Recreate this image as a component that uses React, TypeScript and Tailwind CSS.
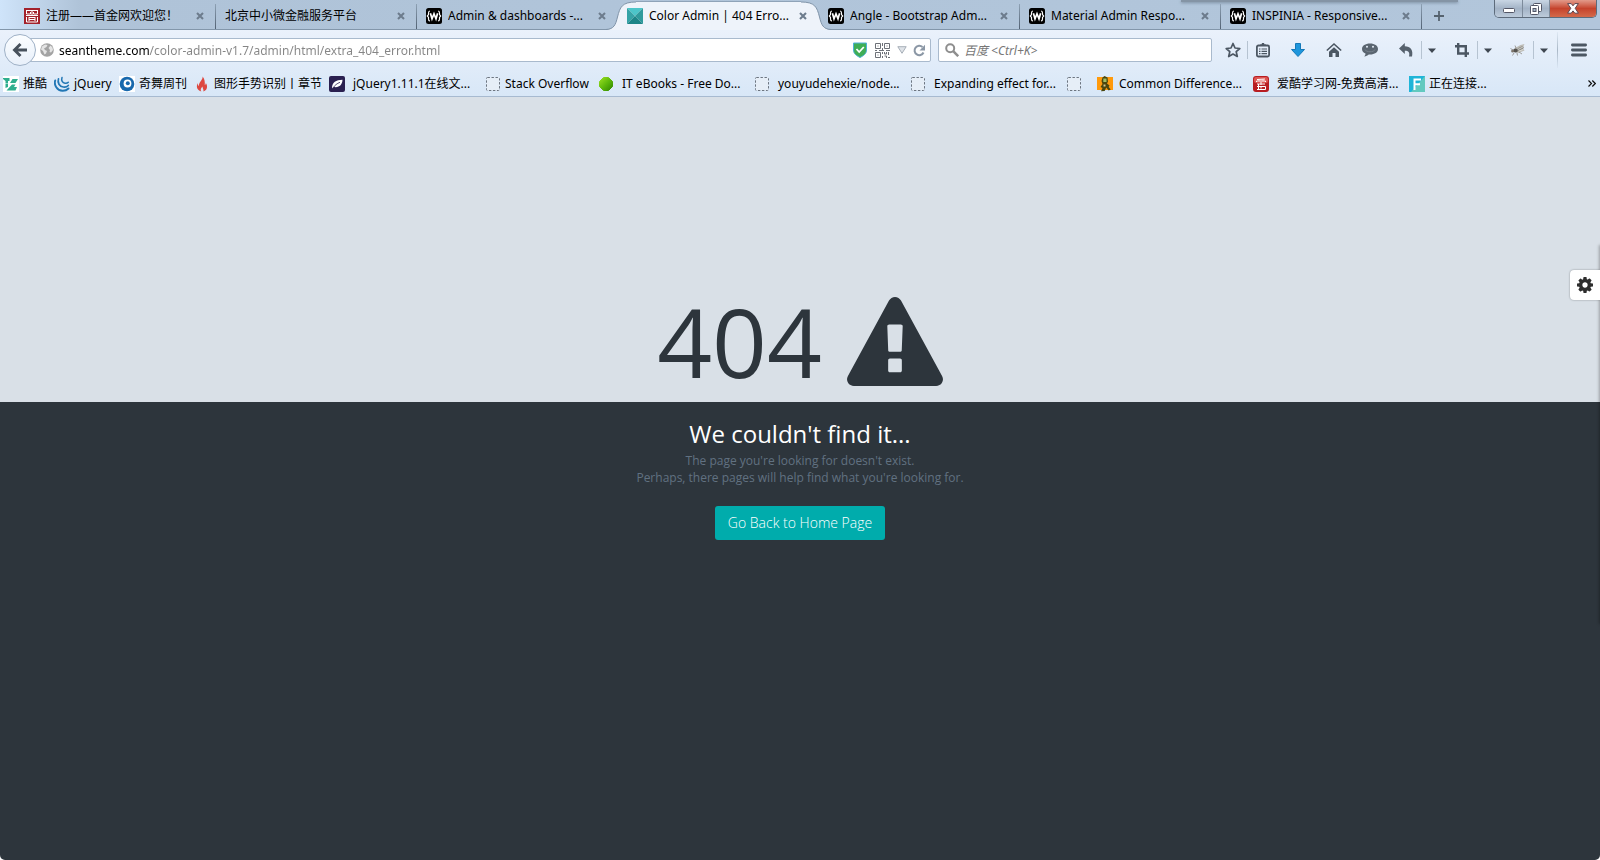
import type { ReactNode } from "react";

const WIcon = () => (
  <svg width="16" height="16" viewBox="0 0 16 16" aria-hidden="true">
    <rect width="16" height="16" rx="2.5" fill="#000" />
    <path d="M4 3C2.700 3 2.500 3.800 2.500 5v1.600L1.300 8l1.200 1.400V11c0 1.200.2 2 1.500 2M12 3c1.300 0 1.500.8 1.500 2v1.600L14.700 8l-1.200 1.400V11c0 1.200-.2 2-1.500 2" fill="none" stroke="#fff" strokeWidth="1.200" />
    <path d="M4.400 5.300l1.600 5.500L8 5.800l2 5 1.600-5.500" fill="none" stroke="#fff" strokeWidth="1.700" />
  </svg>
);

const SealIcon = () => (
  <svg width="16" height="16" viewBox="0 0 16 16" aria-hidden="true">
    <rect width="16" height="16" fill="#a3222b" />
    <path d="M2 2.5h12M2.5 2v4h4V4M13.5 2v4h-4V4M8 2v5M2 7.5h12M2.5 9v5h11V9M5 9.5h6M5 11.5h6M5 9v4M11 9v4" fill="none" stroke="#fff" />
  </svg>
);

const PyramidIcon = () => (
  <svg width="16" height="16" viewBox="0 0 16 16" aria-hidden="true">
    <path d="M0 0h16L8 8z" fill="#4cc5c9" />
    <path d="M0 0l8 8-8 8z" fill="#35a3a6" />
    <path d="M16 0v16L8 8z" fill="#2f9a9c" />
    <path d="M0 16l8-8 8 8z" fill="#1d8587" />
  </svg>
);

const DashedIcon = () => (
  <svg width="16" height="16" viewBox="0 0 16 16" aria-hidden="true">
    <rect x="1.5" y="1.5" width="13" height="13" rx="1" fill="#e6eef7" stroke="#6c7580" strokeDasharray="2.4 1.6" />
  </svg>
);

const TuikuIcon = () => (
  <svg width="16" height="16" viewBox="0 0 16 16" aria-hidden="true">
    <rect width="16" height="16" fill="#fff" />
    <path d="M0 2h6.500v3H5v2H2.500V5L0 3zM7 7l2.500-4H15l-2.500 4zM2.500 7.500H5V11l-2.500 1zM3.500 14.500L9 8.500h3.500l-1.500 2.500h3l-1.500 3.500z" fill="#2fae8e" />
  </svg>
);

const JqueryIcon = () => (
  <svg width="16" height="16" viewBox="0 0 16 16" aria-hidden="true" fill="none" stroke="#2277b5" strokeLinecap="round">
    <path d="M1.2 4.5C-.2 9 3 14.6 8.500 14.800c2.500.1 4.500-.8 6-2.300" strokeWidth="1.900" />
    <path d="M4.500 2.800c-1.300 4 1 7.700 4.800 8.200 2.300.3 4-.4 5-1.500" strokeWidth="1.700" />
    <path d="M8 1.500c-1 3 .5 5.300 3 5.700 1.500.2 2.600-.2 3.300-.9" strokeWidth="1.500" />
  </svg>
);

const QiwuIcon = () => (
  <svg width="16" height="16" viewBox="0 0 16 16" aria-hidden="true">
    <rect width="16" height="16" fill="#fff" />
    <circle cx="8" cy="8" r="7.300" fill="#1768ad" />
    <circle cx="8.500" cy="7.500" r="3.900" fill="#fff" />
    <circle cx="8.800" cy="7.200" r="2" fill="#1768ad" />
  </svg>
);

const FlameIcon = () => (
  <svg width="16" height="16" viewBox="0 0 16 16" aria-hidden="true">
    <path d="M8.600.5c.6 3-3.800 5.500-3.800 9.500C3.900 9.500 3.700 8 3.900 7 2.300 9 2 14 7.300 15.500c-1.200-1.600-.4-3.600 1.200-5 0 1.900 1.400 2.800.9 5 4.300-1.300 4.400-6 2.400-8.500 0 1-.4 1.700-1 2C11 5.500 10.500 2.500 8.600.5z" fill="#dd4840" />
  </svg>
);

const LeafIcon = () => (
  <svg width="16" height="16" viewBox="0 0 16 16" aria-hidden="true">
    <rect width="16" height="16" rx="2" fill="#2a2050" />
    <path d="M3 12.500C3 6 7 4 13.500 3.800c-.2 5.200-3.300 8-8.600 7.200z" fill="#fff" />
    <path d="M3.500 12.500C6 9 8 7.500 11 6.300" fill="none" stroke="#2a2050" strokeWidth=".8" />
  </svg>
);

const GreenIcon = () => (
  <svg width="16" height="16" viewBox="0 0 16 16" aria-hidden="true">
    <defs>
      <linearGradient id="lime" x1="0" y1="0" x2="1" y2="1">
        <stop offset="0" stopColor="#9be022" />
        <stop offset=".5" stopColor="#5fb90c" />
        <stop offset="1" stopColor="#2f8700" />
      </linearGradient>
    </defs>
    <path d="M5.500 1.500h5l4 4v5l-4 4h-5l-4-4v-5z" fill="url(#lime)" stroke="url(#lime)" strokeLinejoin="round" />
  </svg>
);

const HikerIcon = () => (
  <svg width="16" height="16" viewBox="0 0 16 16" aria-hidden="true">
    <rect y="1" width="16" height="13" fill="#ff9a0c" />
    <path d="M7.500 0l3 1.500.5 4-1 2 2.500 2-.8 1.500 2 2.500-2 1-2.500-3-1.500 3.500-3.700.3 1.500-3.300L3.500 11l2-3-1-3 1-3.500z" fill="#49460f" />
    <path d="M6.300 2.500h3.200v3.500H6.300z" fill="#9fbd64" />
    <path d="M6.500 8.500h2v2h-2z" fill="#d5c68d" />
  </svg>
);

const AikuIcon = () => (
  <svg width="16" height="16" viewBox="0 0 16 16" aria-hidden="true">
    <rect width="16" height="16" rx="3" fill="#b81d22" />
    <rect x="1" y="1" width="14" height="6" rx="2" fill="#dc5552" />
    <path d="M4 3.500l8-.5M3.500 6V5h9v1M5.500 3.500l.5 1M10 3.500v1M4 8h8M5.500 8v5M8 6v3M4 10.500h8.500v3H4M8 10.500v2" fill="none" stroke="#fff" />
  </svg>
);

const FIcon = () => (
  <svg width="16" height="16" viewBox="0 0 16 16" aria-hidden="true">
    <rect width="16" height="16" fill="#1fb5d8" />
    <path d="M16 0v16H2z" fill="#62c9bf" />
    <path d="M5.500 14V3.500H12M5.500 8.300H11" fill="none" stroke="#fff" strokeWidth="2" />
  </svg>
);

const CloseGlyph = () => (
  <svg width="8" height="8" viewBox="0 0 8 8" aria-hidden="true">
    <path d="M1 1l6 6M7 1L1 7" stroke="#6d7c8d" strokeWidth="2.100" />
  </svg>
);

type TabData = { title: string; icon?: ReactNode; active?: boolean; divider?: boolean };

const tabs: TabData[] = [
  { title: "注册——首金网欢迎您！", icon: <SealIcon />, divider: true },
  { title: "北京中小微金融服务平台", divider: true },
  { title: "Admin & dashboards -...", icon: <WIcon /> },
  { title: "Color Admin | 404 Erro...", icon: <PyramidIcon />, active: true },
  { title: "Angle - Bootstrap Adm...", icon: <WIcon />, divider: true },
  { title: "Material Admin Respo...", icon: <WIcon />, divider: true },
  { title: "INSPINIA - Responsive...", icon: <WIcon />, divider: true },
];

const bookmarks: { title: string; icon: ReactNode; width: string }[] = [
  { title: "推酷", icon: <TuikuIcon />, width: "w-[51px] gap-1" },
  { title: "jQuery", icon: <JqueryIcon />, width: "w-[65px] gap-1" },
  { title: "奇舞周刊", icon: <QiwuIcon />, width: "w-[75px] gap-1" },
  { title: "图形手势识别丨章节", icon: <FlameIcon />, width: "w-[135px] gap-1" },
  { title: "jQuery1.11.1在线文...", icon: <LeafIcon />, width: "w-[156px] gap-2" },
  { title: "Stack Overflow", icon: <DashedIcon />, width: "w-[113px] gap-1" },
  { title: "IT eBooks - Free Do...", icon: <GreenIcon />, width: "w-[156px] gap-2" },
  { title: "youyudehexie/node...", icon: <DashedIcon />, width: "w-[156px] gap-2" },
  { title: "Expanding effect for...", icon: <DashedIcon />, width: "w-[156px] gap-2" },
  { title: "", icon: <DashedIcon />, width: "w-[31px]" },
  { title: "Common Difference...", icon: <HikerIcon />, width: "w-[156px] gap-[6px]" },
  { title: "爱酷学习网-免费高清...", icon: <AikuIcon />, width: "w-[156px] gap-2" },
  { title: "正在连接...", icon: <FIcon />, width: "w-[156px] gap-1" },
];

function Tab({ tab }: { tab: TabData }) {
  return (
    <div className="relative flex h-[30px] w-[201px] min-w-0 items-center pl-[9px] pr-3 pt-px">
      {tab.active && (
        <span className="absolute -inset-x-[12px] inset-y-0 flex">
          <svg width="30" height="30" viewBox="0 0 30 30" aria-hidden="true">
            <path d="M0 30C8 29 9.500 25 11.500 17 14 7 16 2 30 2v28z" fill="#eef3fa" />
            <path d="M0 29.500C8 29 9.500 25 11.500 17 14 7 16 2 30 2" fill="none" stroke="#7f93a8" />
          </svg>
          <span className="mt-px flex-1 border-t border-[#8fa3b8] bg-[#eef3fa]" />
          <svg width="30" height="30" viewBox="0 0 30 30" aria-hidden="true">
            <path d="M30 30c-8-1-9.500-5-11.500-13C16 7 14 2 0 2v28z" fill="#eef3fa" />
            <path d="M30 29.500c-8-.5-9.500-4.500-11.500-12.500C16 7 14 2 0 2" fill="none" stroke="#7f93a8" />
          </svg>
        </span>
      )}
      <a href="#" className="relative flex min-w-0 flex-1 items-center gap-[6px]">
        {tab.icon && <span className="shrink-0">{tab.icon}</span>}
        <span className="overflow-hidden whitespace-nowrap">{tab.title}</span>
      </a>
      <button type="button" aria-label="Close tab" className="relative shrink-0">
        <CloseGlyph />
      </button>
      {tab.divider && <span className="absolute right-0 top-1 h-[25px] w-px bg-linear-to-b from-[#8ea1b4] to-[#526273]" />}
    </div>
  );
}

function WindowButtons() {
  return (
    <div className="mr-[3px] flex h-[18px] self-start overflow-hidden rounded-b-[5px] border border-t-0 border-[#5d6b7b]">
      <button type="button" aria-label="Minimize" className="flex w-[28px] items-center justify-center border-r border-[#7d8b9b] bg-linear-to-b from-[#c9d6e4] via-[#a3b3c6] to-[#bdcbdb]">
        <svg width="12" height="5" viewBox="0 0 12 5" aria-hidden="true" className="mt-1">
          <rect x=".5" y=".5" width="11" height="4" rx="1" fill="#fff" stroke="#535666" />
        </svg>
      </button>
      <button type="button" aria-label="Restore" className="flex w-[27px] items-center justify-center border-r border-[#7d8b9b] bg-linear-to-b from-[#c9d6e4] via-[#a3b3c6] to-[#bdcbdb]">
        <svg width="12" height="12" viewBox="0 0 12 12" aria-hidden="true">
          <rect x="3.500" y=".5" width="8" height="8" rx="1" fill="#fff" stroke="#535666" />
          <rect x=".5" y="2.500" width="8" height="9" rx="1" fill="#fff" stroke="#535666" />
          <rect x="3" y="5.500" width="3" height="3" fill="#a9b8ca" stroke="#535666" />
        </svg>
      </button>
      <button type="button" aria-label="Close window" className="flex w-[46px] items-center justify-center bg-linear-to-b from-[#e29a8a] via-[#c5432c] to-[#d4694a]">
        <svg width="12" height="11" viewBox="0 0 12 11" aria-hidden="true">
          <path d="M.6.600h3.600L6 2.800 7.800.600h3.600L8.200 5.300l3.200 4.900H7.800L6 7.900l-1.800 2.300H.600l3.200-4.900z" fill="#fff" stroke="#5c4650" strokeWidth="1" />
        </svg>
      </button>
    </div>
  );
}

function Caret() {
  return (
    <svg width="8" height="5" viewBox="0 0 8 5" aria-hidden="true">
      <path d="M0 .5h8L4 5z" fill="#3f4751" />
    </svg>
  );
}

const ToolButton = ({ label, width, children }: { label: string; width: string; children: ReactNode }) => (
  <button type="button" aria-label={label} className={"flex h-6 items-center justify-center " + width}>
    {children}
  </button>
);

const Rule = () => <span className="h-[18px] w-px bg-[#b6c3d1]" />;

function Toolbar() {
  return (
    <div className="flex shrink-0 items-center">
      <ToolButton label="Bookmark this page" width="w-[29px]">
        <svg width="16" height="16" viewBox="0 0 16 16" aria-hidden="true">
          <path d="M8 1.500l2 4.500 4.800.5-3.600 3.200 1.100 4.800L8 12l-4.300 2.500 1.100-4.800L1.200 6.500 6 6z" fill="none" stroke="#4c5763" strokeWidth="1.700" strokeLinejoin="round" />
        </svg>
      </ToolButton>
      <Rule />
      <ToolButton label="Show bookmarks" width="w-[29px]">
        <svg width="16" height="16" viewBox="0 0 16 16" aria-hidden="true">
          <rect x="1.900" y="3.500" width="12.200" height="11" rx="1.500" fill="none" stroke="#4c5763" strokeWidth="1.800" />
          <path d="M5 4V2.500h1.500L7 1h2l.5 1.500H11V4z" fill="#4c5763" />
          <path d="M4 7h1.500M4 9.300h1.500M4 11.600h1.500M6.500 7H12M6.500 9.300H12M6.500 11.600H12" stroke="#4c5763" strokeWidth="1.200" />
        </svg>
      </ToolButton>
      <ToolButton label="Downloads" width="w-[41px]">
        <svg width="16" height="16" viewBox="0 0 16 16" aria-hidden="true">
          <path d="M5.500 1.500h5v6h4L8 14.500 1.500 7.500h4z" fill="#1e96dc" stroke="#1478b8" strokeLinejoin="round" />
        </svg>
      </ToolButton>
      <ToolButton label="Home" width="w-[31px]">
        <svg width="16" height="16" viewBox="0 0 16 16" aria-hidden="true">
          <path d="M.8 8.500L8 2l7.200 6.500" fill="none" stroke="#4c5763" strokeWidth="1.600" />
          <path d="M3 9.800l5-4.500 5 4.500V15H9.500v-4h-3v4H3z" fill="#4c5763" />
        </svg>
      </ToolButton>
      <ToolButton label="Chat" width="w-[41px]">
        <svg width="18" height="16" viewBox="0 0 18 16" aria-hidden="true">
          <path d="M9 1.500c4.700 0 8 2.300 8 5.500s-3.300 5.500-8 5.500l-1.300-.1c-1 1-2.700 1.800-4.500 2 .9-.8 1.300-1.900 1.300-2.800C2.300 10.600 1 9 1 7c0-3.200 3.300-5.500 8-5.500z" fill="#5a6570" />
          <circle cx="6" cy="4.700" r="1" fill="#e4edf7" />
          <circle cx="12" cy="4.700" r="1" fill="#e4edf7" />
          <path d="M4 7.500c1 3 9 3 10 0" fill="none" stroke="#77828d" />
        </svg>
      </ToolButton>
      <ToolButton label="Undo" width="w-[31px]">
        <svg width="16" height="16" viewBox="0 0 16 16" aria-hidden="true">
          <path d="M6.800 1v3.200C12.500 4.200 15.500 8 14 14.500h-3C12 10.500 10.500 8.800 6.800 8.800V12L1 6.500z" fill="#56616d" />
        </svg>
      </ToolButton>
      <Rule />
      <ToolButton label="Undo list" width="w-[20px]"><Caret /></ToolButton>
      <ToolButton label="Crop" width="w-[35px]">
        <svg width="16" height="16" viewBox="0 0 16 16" aria-hidden="true" className="ml-1">
          <path d="M4.200 1v10.500H15M1 4.200h10.800V15" fill="none" stroke="#4c5763" strokeWidth="2.400" />
        </svg>
      </ToolButton>
      <Rule />
      <ToolButton label="Crop options" width="w-[20px]"><Caret /></ToolButton>
      <ToolButton label="Firebug" width="w-[35px]">
        <svg width="18" height="16" viewBox="0 0 18 16" aria-hidden="true" className="ml-1">
          <path d="M6 6l5.500-3 4-1-2 4 2 2.500-6 2.500-5-1z" fill="#bdbcb6" />
          <ellipse cx="6.500" cy="8.500" rx="2.400" ry="2" fill="#55524e" />
          <circle cx="3.600" cy="9" r="1.500" fill="#7b736a" />
          <path d="M1.500 6.500l2.500 1.500M5 11l-1.500 2.500M8 11l.5 2.500M10 10l3 2M7 6l-1-2.500" fill="none" stroke="#8a8680" strokeWidth=".8" />
          <ellipse cx="11.500" cy="6.500" rx="3.500" ry="1.500" transform="rotate(-25 11.500 6.500)" fill="#8b8983" />
          <path d="M9 7.500l5-2.500M10 9l4-1.500" stroke="#dedfdc" strokeWidth=".8" />
        </svg>
      </ToolButton>
      <Rule />
      <ToolButton label="Firebug options" width="w-[20px]"><Caret /></ToolButton>
      <span className="ml-[3px] h-[36px] w-px bg-linear-to-b from-[#e0eaf5] via-[#a9b7c6] to-[#dbe7f5]" />
      <ToolButton label="Open menu" width="w-[42px]">
        <svg width="16" height="14" viewBox="0 0 16 14" aria-hidden="true">
          <path d="M1.400 2h13.200M1.400 7h13.200M1.400 12h13.200" stroke="#4c5763" strokeWidth="2.800" strokeLinecap="round" />
        </svg>
      </ToolButton>
    </div>
  );
}

function NavBar() {
  return (
    <div className="flex h-10 items-center pl-1">
      <button type="button" aria-label="Back" className="relative z-10 flex size-8 shrink-0 items-center justify-center rounded-full border border-[#9fb1c6] bg-linear-to-b from-[#fbfdff] to-[#e8f0fa]">
        <svg width="16" height="16" viewBox="0 0 16 16" aria-hidden="true">
          <path d="M8.500 2L2.500 8l6 6M3 8h12" fill="none" stroke="#47515c" strokeWidth="2.900" />
        </svg>
      </button>
      <div className="-ml-2 flex h-6 min-w-0 flex-1 items-center rounded-r-[2px] border border-[#a9bacd] bg-white pl-[11px] pr-1">
        <svg width="14" height="14" viewBox="0 0 14 14" aria-hidden="true" className="shrink-0">
          <circle cx="7" cy="7" r="6.800" fill="#a3a3a3" />
          <path d="M2 3.500l3-2 2.500.5L6.500 4 4 5.500 5 7l2 1-1 2.500-1.500 1L3 8 1 6.500zM8.500 5l2-2.500 2 2L13 7l-2 2.500L9.500 9 10 7z" fill="#e4e4e4" />
        </svg>
        <input
          aria-label="Address"
          defaultValue="seantheme.com/color-admin-v1.7/admin/html/extra_404_error.html"
          className="ml-[5px] h-5 min-w-0 flex-1 bg-[linear-gradient(to_right,#000_90px,#858585_90px)] bg-clip-text text-transparent caret-black outline-none"
        />
        <svg width="14" height="16" viewBox="0 0 14 16" aria-hidden="true" className="mr-2 shrink-0">
          <path d="M.5 1h13v7c0 4-3.500 6-6.500 7.500C4 14 .5 12 .5 8z" fill="#3fae56" stroke="#4fb0d8" />
          <path d="M3.500 7l2.700 3 4.600-5" fill="none" stroke="#fff" strokeWidth="1.800" />
        </svg>
        <svg width="15" height="15" viewBox="0 0 15 15" aria-hidden="true" className="shrink-0" fill="none" stroke="#6c7077">
          <path d="M.5.500h5v5h-5zM9.500.500h5v5h-5zM.5 9.500h5v5h-5z" />
          <path d="M2.500 3h1M11.500 3h1M2.500 12h1M7.500 0v3M7.500 5v2M0 7.500h2M4 7.500h5M11 7.500h4M7.500 9v2M9.500 9v2h2V9M13.500 9v3M7.500 13v2M9.500 13h2v2M13 14.500h2" />
        </svg>
        <svg width="10" height="8" viewBox="0 0 10 8" aria-hidden="true" className="ml-[7px] shrink-0">
          <path d="M.8.700h8.400L5 7.300z" fill="#dfe3e8" stroke="#a7afb8" />
        </svg>
        <button type="button" aria-label="Reload" className="ml-[6px] shrink-0">
          <svg width="13" height="13" viewBox="0 0 13 13" aria-hidden="true">
            <path d="M10.500 8.500A4.700 4.700 0 1 1 9.500 3" fill="none" stroke="#8b97a5" strokeWidth="2" />
            <path d="M12 .8v5.700H6.500z" fill="#8b97a5" />
          </svg>
        </button>
      </div>
      <div className="ml-[7px] mr-[6px] flex h-6 w-[274px] min-w-0 items-center rounded-[2px] border border-[#a9bacd] bg-white pl-[6px]">
        <svg width="14" height="14" viewBox="0 0 14 14" aria-hidden="true" className="shrink-0">
          <circle cx="5.200" cy="5.200" r="4" fill="none" stroke="#8e8e8e" strokeWidth="2" />
          <path d="M8.200 8.200l5 5" stroke="#8e8e8e" strokeWidth="2.500" />
        </svg>
        <input
          aria-label="Search"
          placeholder="百度 <Ctrl+K>"
          className="ml-[5px] h-5 min-w-0 flex-1 text-black outline-none placeholder:italic placeholder:text-[#767676]"
        />
      </div>
      <Toolbar />
    </div>
  );
}

export default function App() {
  return (
    <div className="min-h-screen bg-white">
      <div className="flex min-h-screen flex-col overflow-hidden rounded-b-[5px] font-['Noto_Sans','Noto_Sans_CJK_SC',sans-serif] text-[12px] leading-4 text-black">
        <header>
          <div className="relative bg-linear-to-r from-[#cfe4fa] via-[#afc3d8] via-5% to-[#b2c6db]">
            <span className="absolute right-[142px] top-0 h-[2px] w-[277px] bg-[#8494a5] shadow-[0_1px_3px_#75879a]" />
            <span className="absolute inset-x-0 bottom-0 h-px bg-[#8296aa]" />
            <nav aria-label="Tabs" className="relative flex items-center pl-[15px]">
              {tabs.map((tab) => (
                <Tab key={tab.title} tab={tab} />
              ))}
              <button type="button" aria-label="New tab" className="ml-[11px] mt-[2px]">
                <svg width="12" height="12" viewBox="0 0 12 12" aria-hidden="true">
                  <path d="M6 1v10M1 6h10" stroke="#56636f" strokeWidth="1.800" />
                </svg>
              </button>
              <span className="flex-1" />
              <WindowButtons />
            </nav>
          </div>
          <div className="border-b border-[#a7bad0] bg-linear-to-b from-[#eaf1fb] to-[#d8e7f7]">
            <NavBar />
            <nav aria-label="Bookmarks" className="flex h-[26px] items-center overflow-hidden pl-[3px] pr-1 pt-px">
              {bookmarks.map((b, i) => (
                <a key={i} href="#" aria-label={b.title || "Bookmark"} className={"flex shrink-0 items-center whitespace-nowrap " + b.width}>
                  <span className="shrink-0">{b.icon}</span>
                  {b.title && <span>{b.title}</span>}
                </a>
              ))}
              <button type="button" aria-label="More bookmarks" className="ml-auto">
                <svg width="8" height="7" viewBox="0 0 8 7" aria-hidden="true">
                  <path d="M.5.500l3 3-3 3M4.300.500l3 3-3 3" fill="none" stroke="#111" strokeWidth="1.200" />
                </svg>
              </button>
            </nav>
          </div>
        </header>

        <main className="relative flex flex-1 flex-col font-['Open_Sans',sans-serif]">
          <section className="flex grow-2 basis-0 items-end justify-center bg-[#d9e0e7] text-[#2d353c]">
            <h1 className="mb-[13px] flex items-center gap-[25px] text-[96px] leading-[96px]">
              404
              <svg width="96" height="89" viewBox="0 0 1792 1664" fill="currentColor" aria-hidden="true">
                <path d="M1024 1375v-190q0-14-9.500-23.500t-22.500-9.500h-192q-13 0-22.500 9.500t-9.500 23.500v190q0 14 9.500 23.500t22.500 9.500h192q13 0 22.500-9.500t9.500-23.500zm-2-374l18-459q0-12-10-19-13-11-24-11h-220q-11 0-24 11-10 7-10 21l17 457q0 10 10 16.500t24 6.500h185q14 0 23.500-6.500t10.500-16.500zm-14-934l768 1408q35 63-2 126-17 29-46.500 46t-63.500 17h-1536q-34 0-63.500-17t-46.500-46q-37-63-2-126l768-1408q17-31 47-49t65-18 65 18 47 49z" />
              </svg>
            </h1>
          </section>
          <section className="flex grow-3 basis-0 flex-col items-center bg-[#2d353c] text-center">
            <h2 className="mt-4 text-[24px] leading-8 text-white">We couldn't find it...</h2>
            <p className="mt-0.5 leading-[17px] text-[#617181]">
              The page you're looking for doesn't exist.
              <br />
              Perhaps, there pages will help find what you're looking for.
            </p>
            <a href="#" className="mt-5 rounded-[3px] bg-[#00acac] px-[13px] py-[7px] text-[14px] font-light leading-5 text-white">
              Go Back to Home Page
            </a>
          </section>
          <span className="absolute -right-px bottom-[237px] top-[149px] w-px shadow-[0_0_3px_1px_rgba(0,0,0,0.3)]" />
          <button type="button" aria-label="Theme settings" className="absolute right-0 top-[173px] flex size-[30px] items-center justify-center rounded-l-[4px] bg-white shadow-[0_0_2px_rgba(0,0,0,0.4)]">
            <svg width="16" height="16" viewBox="0 0 1536 1536" aria-hidden="true" fill="#2d2d2d">
              <path d="M1024 768q0-106-75-181t-181-75-181 75-75 181 75 181 181 75 181-75 75-181zm512-109v222q0 12-8 23t-20 13l-185 28q-19 54-39 91 35 50 107 138 10 12 10 25t-9 23q-27 37-99 108t-94 71q-12 0-26-9l-138-108q-44 23-91 38-16 136-29 186-7 28-36 28H657q-14 0-24.500-8.500T621 1506l-28-184q-49-16-90-37l-141 107q-10 9-25 9-14 0-25-11-126-114-165-168-7-10-7-23 0-12 8-23 15-21 51-66.500t54-70.500q-27-50-41-99L29 913q-13-2-21-12.500T0 877V655q0-12 8-23t19-13l186-28q14-46 39-92-40-57-107-138-10-12-10-24 0-10 9-23 26-36 98.500-107.500T337 135q13 0 26 10l138 107q44-23 91-38 16-136 29-186 7-28 36-28h222q14 0 24.500 8.500T915 30l28 184q49 16 90 37l142-107q9-9 24-9 13 0 25 10 129 119 165 170 7 8 7 22 0 12-8 23-15 21-51 66.500t-54 70.500q26 50 41 98l183 28q13 2 21 12.500t8 23.500z" />
            </svg>
          </button>
        </main>
      </div>
    </div>
  );
}
